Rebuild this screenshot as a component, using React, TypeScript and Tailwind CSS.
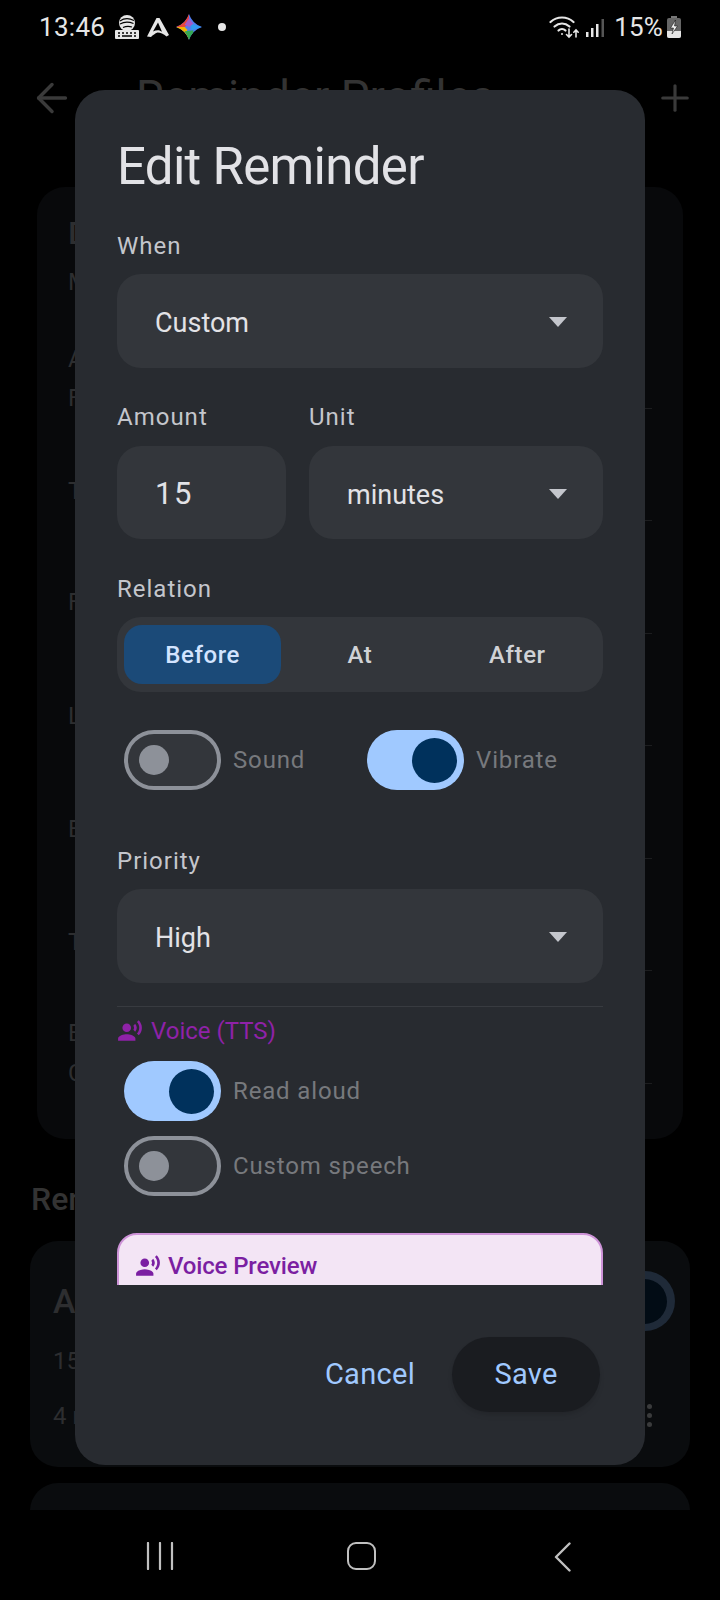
import { ArrowLeft, Plus } from "lucide-react";

const font = { fontFamily: "Roboto, sans-serif" };

const behindRows = [
  { lines: ["A", "F"], cls: "-mb-[10px] leading-[39px]" },
  { lines: ["T"], cls: "pb-[17px] leading-[24px]" },
  { lines: ["F"], cls: "pb-[19px] leading-[24px]" },
  { lines: ["L"], cls: "pb-[17px] leading-[24px]" },
  { lines: ["E"], cls: "pb-[17px] leading-[24px]" },
  { lines: ["T"], cls: "pb-[16px] leading-[24px]" },
  { lines: ["E", "C"], cls: "-mb-[10px] leading-[40px]" },
];

function VoiceIcon({ className }: { className: string }) {
  return (
    <svg viewBox="0 0 24 24" className={className} fill="currentColor">
      <circle cx="9" cy="9" r="4" />
      <path d="M9 15c-2.67 0-8 1.34-8 4v2h16v-2c0-2.66-5.33-4-8-4zm7.76-9.64l-1.68 1.69c.84 1.18.84 2.71 0 3.89l1.68 1.69c2.02-2.02 2.02-5.07 0-7.27zM20.07 2l-1.63 1.63c2.77 3.02 2.77 7.56 0 10.74L20.07 16c3.9-3.89 3.91-9.95 0-14z" />
    </svg>
  );
}

function Caret() {
  return (
    <svg viewBox="0 0 18 10" className="w-[18px] h-[10px] mt-[2px]" fill="#c4c6cc">
      <polygon points="0,0 18,0 9,10" />
    </svg>
  );
}

function Switch({ on }: { on: boolean }) {
  if (on) {
    return (
      <div className="w-[97px] h-[60px] rounded-full bg-[#a0c9ff] flex items-center justify-end pr-[7px] shrink-0">
        <div className="w-[45px] h-[45px] rounded-full bg-[#00315c]" />
      </div>
    );
  }
  return (
    <div className="w-[97px] h-[60px] rounded-full bg-[#33363b] border-[4px] border-[#8d9199] flex items-center pl-[11px] shrink-0">
      <div className="w-[30px] h-[30px] rounded-full bg-[#8d9199]" />
    </div>
  );
}

function Select({ value }: { value: string }) {
  return (
    <div className="h-[94px] rounded-[24px] bg-[#33363b] flex items-center justify-between pl-[38px] pr-[36px]">
      <span className="text-[27px] mt-[5px] text-[#e2e2e6]">{value}</span>
      <Caret />
    </div>
  );
}

function Label({ children, cls }: { children: string; cls: string }) {
  return <div className={`h-[32px] leading-[32px] text-[24px] tracking-[1px] text-[#c4c6cc] ${cls}`}>{children}</div>;
}

function StatusBar() {
  return (
    <div className="h-[54px] shrink-0 flex items-center justify-between pl-[39px] pr-[39px] text-[#e6e6e6]">
      <div className="flex items-center">
        <span className="text-[26px] tracking-[0.3px] leading-none">13:46</span>
        {/* swiftkey */}
        <svg viewBox="0 0 24 24" className="w-[24px] h-[24px] ml-[10px]">
          <circle cx="12" cy="8" r="8" fill="#e6e6e6" />
          <path d="M5 6c3.5-2.5 9-3 14-.5M5 9c3.5-2 8.5-2.5 13.5-.5M8 12.5c2.5-1.2 6-1.5 9-.5" stroke="#000" strokeWidth="1.1" fill="none" />
          <rect x="0" y="15" width="24" height="9" rx="1" fill="#e6e6e6" />
          <path d="M3 18h2M7 18h2M11 18h2M15 18h2M19 18h2M3 21h2M7 21h10M19 21h2" stroke="#000" strokeWidth="1.3" />
        </svg>
        {/* arc */}
        <svg viewBox="0 0 24 20" className="w-[24px] h-[20px] ml-[7px]">
          <path d="M1 19.5L10.5 1h3L23 18l-2.5 1.5c-3-2.5-6-4-9-4-2.5 1-4.5 2.5-6.5 4.5z" fill="#e6e6e6" />
          <path d="M12 5.5L7 14.5c2-1 4-1.5 6-1.2l3 1.4z" fill="#000" />
        </svg>
        {/* gemini */}
        <svg viewBox="0 0 24 24" className="w-[26px] h-[26px] ml-[6px]">
          <defs>
            <clipPath id="star">
              <path d="M12 0Q15 9 24 12Q15 15 12 24Q9 15 0 12Q9 9 12 0Z" />
            </clipPath>
          </defs>
          <g clipPath="url(#star)">
            <rect x="0" y="0" width="24" height="24" fill="#4f7df0" />
            <polygon points="12,0 0,12 8,12 12,9" fill="#e8453c" />
            <polygon points="0,12 12,24 10,14 8,12" fill="#f4b400" />
            <polygon points="12,24 8,16 16,15 16,18" fill="#34a853" />
            <polygon points="24,12 14,9 14,15" fill="#2f9bf0" />
            <polygon points="12,4 16,9 12,12 8,10" fill="#a35ac8" />
          </g>
        </svg>
        <div className="w-[8px] h-[8px] rounded-full bg-[#e6e6e6] ml-[16px]" />
      </div>
      <div className="flex items-center">
        {/* wifi + arrows */}
        <svg viewBox="0 0 32 24" className="w-[32px] h-[24px]" fill="none" stroke="#e6e6e6" strokeWidth="2.2" strokeLinecap="round">
          <path d="M1.5 7C8 1 18 1 24.5 7" />
          <path d="M5.5 11.5C10 7.5 16 7.5 20.5 11.5" />
          <path d="M9.5 15.5C11.5 13.5 14.5 13.5 16.5 15.5" />
          <circle cx="13" cy="19" r="1" fill="#e6e6e6" stroke="none" />
          <path d="M20 14v8M17.5 19.5l2.5 2.5 2.5-2.5M27 22v-7M24.8 17.2l2.2-2.2 2.2 2.2" strokeWidth="1.6" />
        </svg>
        <svg viewBox="0 0 18 18" className="w-[18px] h-[18px] ml-[5px] mt-[2px]">
          <rect x="0" y="13" width="2.5" height="5" fill="#e6e6e6" />
          <rect x="5" y="9" width="2.5" height="9" fill="#e6e6e6" />
          <rect x="10" y="5" width="2.5" height="13" fill="#e6e6e6" />
          <rect x="15.5" y="0" width="2.5" height="18" fill="#555555" />
        </svg>
        <span className="text-[26px] tracking-[0.2px] leading-none ml-[10px]">15%</span>
        <svg viewBox="0 0 14 22" className="w-[14px] h-[22px] ml-[4px]">
          <rect x="4" y="0" width="6" height="2" fill="#777777" />
          <rect x="0" y="2" width="14" height="20" rx="2" fill="#666666" />
          <path d="M0 15h14v5a2 2 0 0 1-2 2H2a2 2 0 0 1-2-2z" fill="#e6e6e6" />
          <path d="M8.5 4L3.5 12h3l-1.5 6 5.5-8h-3z" fill="#f0f0f0" stroke="#000" strokeWidth="0.5" />
        </svg>
      </div>
    </div>
  );
}

function NavBar() {
  return (
    <div className="h-[90px] shrink-0 bg-black flex items-start justify-between pt-[32px] pl-[146px] pr-[148px]">
      <svg viewBox="0 0 28 28" className="w-[28px] h-[28px]" stroke="#c0c0c0" strokeWidth="2.2" strokeLinecap="round">
        <path d="M2 1v26M14 1v26M26 1v26" />
      </svg>
      <div className="w-[29px] h-[28px] mr-[6px] rounded-[9px] border-[2.5px] border-[#c0c0c0]" />
      <svg viewBox="0 0 18 30" className="w-[18px] h-[30px]" fill="none" stroke="#c0c0c0" strokeWidth="2.4" strokeLinecap="round" strokeLinejoin="round">
        <path d="M15.5 1.5L2 15l13.5 13.5" />
      </svg>
    </div>
  );
}

function Behind() {
  return (
    <div className="flex-1 min-h-0 overflow-hidden">
      {/* app bar */}
      <div className="h-[133px] flex items-start justify-between pl-[29px] pr-[24px] text-[#3a3a3a]">
        <ArrowLeft className="w-[46px] h-[46px] mt-[21px]" strokeWidth={1.8} />
        <span className="absolute left-[136px] top-[73px] text-[45.5px] leading-[50px] text-[#333333]">Reminder Profiles</span>
        <Plus className="w-[42px] h-[42px] mt-[23px]" strokeWidth={1.8} />
      </div>
      {/* profile card */}
      <div className="mx-[37px] h-[952px] rounded-[28px] bg-[#08090b] pl-[31px] pr-[31px] text-[#2d2e30] text-[24px]">
        <div className="h-[109px] pt-[28px]">
          <div className="text-[32px] leading-[36px] font-medium">D</div>
          <div className="leading-[30px] mt-[16px]">M</div>
        </div>
        {behindRows.map((row, i) => (
          <div key={i} className="h-[112.5px] flex flex-col justify-end">
            <div className={row.cls}>
              {row.lines.map((l, j) => (
                <div key={j}>{l}</div>
              ))}
            </div>
            <div className="ml-[20px] h-px bg-[#1c1d1f]" />
          </div>
        ))}
      </div>
      <div className="mt-[42px] ml-[31px] h-[36px] leading-[36px] text-[32px] font-medium text-[#333333]">Rem</div>
      {/* reminder card */}
      <div className="mt-[24px] mx-[30px] h-[226px] rounded-[28px] bg-[#0a0c0e] pl-[23px] pr-[15px] text-[#2d2e30] relative">
        <div className="flex justify-between pt-[30px]">
          <span className="text-[34px] leading-[60px] font-medium">A</span>
          <div className="w-[97px] h-[60px] rounded-full bg-[#1f2a38] flex items-center justify-end pr-[8px]">
            <div className="w-[45px] h-[45px] rounded-full bg-[#020c15]" />
          </div>
        </div>
        <div className="text-[24px] leading-[30px] mt-[15px]">15</div>
        <div className="flex justify-between pr-[23px] mt-[25px]">
          <span className="text-[24px] leading-[30px]">4 r</span>
          <div className="flex flex-col gap-[4px] pt-[3px]">
            <div className="w-[5px] h-[5px] rounded-full bg-[#3a3b3c]" />
            <div className="w-[5px] h-[5px] rounded-full bg-[#3a3b3c]" />
            <div className="w-[5px] h-[5px] rounded-full bg-[#3a3b3c]" />
          </div>
        </div>
      </div>
      <div className="mt-[16px] mx-[30px] h-[60px] rounded-[28px] bg-[#0a0c0e]" />
    </div>
  );
}

function Modal() {
  return (
    <div className="absolute left-[75px] top-[90px] w-[570px] h-[1375px] rounded-[30px] bg-[#282b30] pt-[41px]">
      <h1 className="pl-[42px] pt-[2px] h-[68px] text-[51px] leading-[68px] tracking-[-0.7px] text-[#e2e2e6]">Edit Reminder</h1>
      <div className="h-[1086px] overflow-hidden px-[42px]">
        <Label cls="mt-[31px] mb-[12px]">When</Label>
        <Select value="Custom" />

        <div className="flex gap-[23px] mt-[33px]">
          <div className="w-[169px]">
            <Label cls="mb-[13px]">Amount</Label>
            <div className="h-[93px] rounded-[24px] bg-[#33363b] flex items-center pl-[38px] pt-[3px] text-[31px] tracking-[1.5px] text-[#e2e2e6]">15</div>
          </div>
          <div className="flex-1">
            <Label cls="mb-[13px]">Unit</Label>
            <div className="h-[93px] rounded-[24px] bg-[#33363b] flex items-center justify-between pl-[38px] pr-[36px]">
              <span className="text-[27px] mt-[5px] text-[#e2e2e6]">minutes</span>
              <Caret />
            </div>
          </div>
        </div>

        <Label cls="mt-[34px] mb-[12px]">Relation</Label>
        <div className="h-[75px] rounded-[24px] bg-[#33363b] px-[7px] py-[8px] grid grid-cols-3 text-[24px] font-medium tracking-[0.6px]">
          <div className="rounded-[18px] bg-[#1b4a78] text-[#d3e4ff] flex items-center justify-center">Before</div>
          <div className="text-[#d0d2d6] flex items-center justify-center">At</div>
          <div className="text-[#d0d2d6] flex items-center justify-center">After</div>
        </div>

        <div className="flex mt-[38px] ml-[7px] text-[24px] tracking-[0.85px] text-[#77797d]">
          <div className="w-[243px] flex items-center gap-[12px]">
            <Switch on={false} />
            <span>Sound</span>
          </div>
          <div className="flex items-center gap-[12px]">
            <Switch on />
            <span>Vibrate</span>
          </div>
        </div>

        <Label cls="mt-[55px] mb-[12px]">Priority</Label>
        <Select value="High" />

        <div className="h-px bg-[#383b40] mt-[23px]" />

        <div className="mt-[8px] h-[32px] flex items-center text-[#8f22a8]">
          <VoiceIcon className="w-[26px] h-[26px]" />
          <span className="ml-[8px] text-[24px]">Voice (TTS)</span>
        </div>

        <div className="mt-[14px] ml-[7px] flex items-center gap-[12px] text-[24px] tracking-[0.85px] text-[#77797d]">
          <Switch on />
          <span>Read aloud</span>
        </div>
        <div className="mt-[15px] ml-[7px] flex items-center gap-[12px] text-[24px] tracking-[0.85px] text-[#77797d]">
          <Switch on={false} />
          <span>Custom speech</span>
        </div>

        <div className="mt-[37px] h-[100px] rounded-[20px] bg-[#f3e5f5] border-2 border-[#ce93d8] pt-[15px] pl-[16px] flex items-start gap-[7px] text-[#7b1fa2]">
          <VoiceIcon className="w-[26px] h-[26px] mt-[3px]" />
          <span className="text-[24px] leading-[32px] font-medium tracking-[-0.15px]">Voice Preview</span>
        </div>
      </div>
      <div className="mt-[52px] flex justify-end items-center pr-[45px] text-[29px] tracking-[0.3px] text-[#a0c9ff]">
        <button className="mr-[37px]">Cancel</button>
        <button className="h-[75px] w-[148px] rounded-[38px] bg-[#1a1c20] shadow-md">Save</button>
      </div>
    </div>
  );
}

export default function App() {
  return (
    <div className="relative w-[720px] h-[1600px] bg-black overflow-hidden flex flex-col" style={font}>
      <StatusBar />
      <Behind />
      <NavBar />
      <Modal />
    </div>
  );
}
